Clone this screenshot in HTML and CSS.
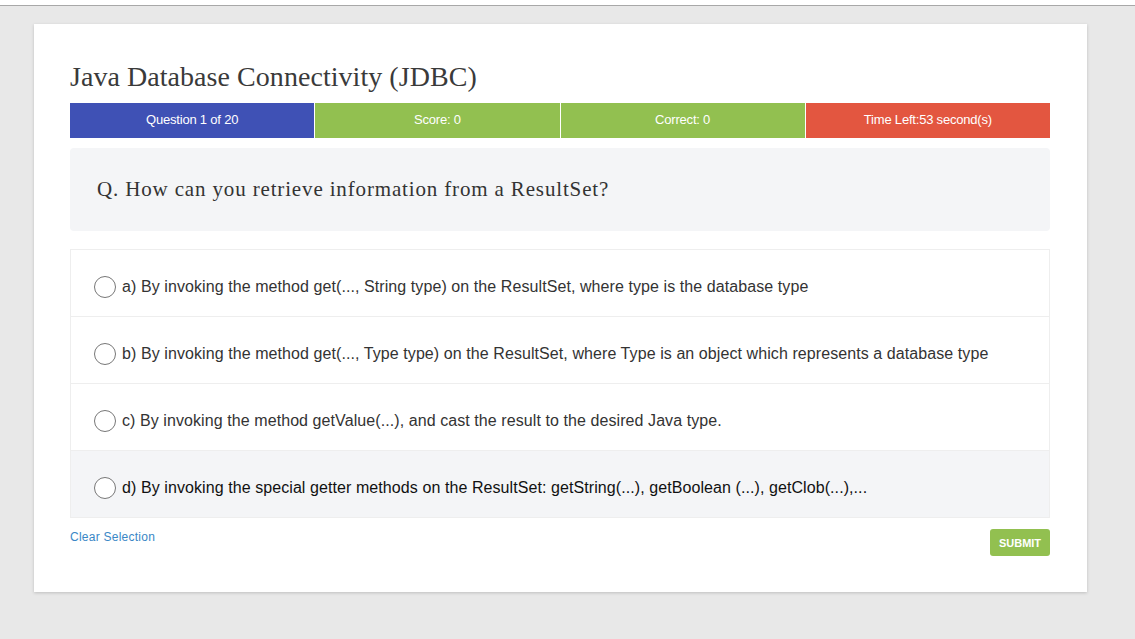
FILE: index.html
```html
<!DOCTYPE html>
<html>
<head>
<meta charset="utf-8">
<link rel="stylesheet" href="styles.css">
</head>
<body>
<div class="topstrip"></div>
<div class="page">
  <div class="card">
    <h1 class="title">Java Database Connectivity (JDBC)</h1>
    <div class="status">
      <div class="cell blue">Question 1 of 20</div>
      <div class="cell green">Score: 0</div>
      <div class="cell green">Correct: 0</div>
      <div class="cell red">Time Left:53 second(s)</div>
    </div>
    <div class="question">Q. How can you retrieve information from a ResultSet?</div>
    <ul class="options">
      <li class="option"><span class="radio"></span><span class="label">a) By invoking the method get(..., String type) on the ResultSet, where type is the database type</span></li>
      <li class="option"><span class="radio"></span><span class="label">b) By invoking the method get(..., Type type) on the ResultSet, where Type is an object which represents a database type</span></li>
      <li class="option"><span class="radio"></span><span class="label">c) By invoking the method getValue(...), and cast the result to the desired Java type.</span></li>
      <li class="option hover"><span class="radio"></span><span class="label">d) By invoking the special getter methods on the ResultSet: getString(...), getBoolean (...), getClob(...),...</span></li>
    </ul>
    <div class="footer">
      <a class="clear" href="#">Clear Selection</a>
      <button class="submit">SUBMIT</button>
    </div>
  </div>
</div>
</body>
</html>
```
FILE: styles.css
```css
html, body {
  margin: 0;
  padding: 0;
}
body {
  background: #e8e8e8;
  font-family: "Liberation Sans", Arial, sans-serif;
  height: 639px;
  overflow: hidden;
}
.topstrip {
  height: 5px;
  background: #ffffff;
  border-bottom: 1px solid #a8a8a8;
}
.page {
  padding: 18px 48px 0 34px;
}
.card {
  background: #ffffff;
  box-shadow: 0 1px 3px rgba(0,0,0,0.18);
  padding: 33px 37px 36px 36px;
  width: 980px;
}
.title {
  margin: 0 0 6px 0;
  font-family: "Liberation Serif", serif;
  font-weight: normal;
  font-size: 28px;
  line-height: 40px;
  color: #3a3a3a;
  letter-spacing: 0.05px;
}
.status {
  display: flex;
  height: 35px;
  gap: 1px;
}
.cell {
  flex: 1;
  display: flex;
  align-items: center;
  justify-content: center;
  padding-bottom: 2px;
  box-sizing: border-box;
  color: #ffffff;
  font-size: 13px;
  letter-spacing: -0.2px;
}
.blue { background: #3f51b5; }
.green { background: #92c050; }
.red { background: #e35640; }
.question {
  margin-top: 10px;
  background: #f4f5f7;
  border-radius: 4px;
  height: 83px;
  display: flex;
  align-items: center;
  padding: 0 27px;
  font-family: "Liberation Serif", serif;
  font-size: 21px;
  color: #333333;
  letter-spacing: 0.85px;
}
.options {
  list-style: none;
  margin: 18px 0 0 0;
  padding: 0;
  border: 1px solid #eeeeee;
  border-bottom: none;
}
.option {
  display: flex;
  align-items: center;
  padding: 26px 24px 18px 23px;
  border-bottom: 1px solid #eeeeee;
  font-size: 16px;
  color: #333333;
  letter-spacing: 0.08px;
}
.option.hover {
  background: #f4f5f7;
  color: #111111;
}
.radio {
  width: 20px;
  height: 20px;
  border: 1px solid #777777;
  border-radius: 50%;
  background: #ffffff;
  flex: none;
  margin-right: 6px;
}
.label {
  line-height: 22px;
}
.footer {
  display: flex;
  justify-content: space-between;
  align-items: flex-start;
  margin-top: 10px;
}
.clear {
  font-size: 12px;
  color: #3a87c6;
  text-decoration: none;
  margin-top: 2px;
  letter-spacing: 0.25px;
}
.submit {
  margin-top: 1px;
  width: 60px;
  height: 27px;
  border: none;
  border-radius: 3px;
  background: #92c050;
  color: #ffffff;
  font-family: "Liberation Sans", Arial, sans-serif;
  font-size: 11px;
  font-weight: bold;
  padding: 0;
}
```
